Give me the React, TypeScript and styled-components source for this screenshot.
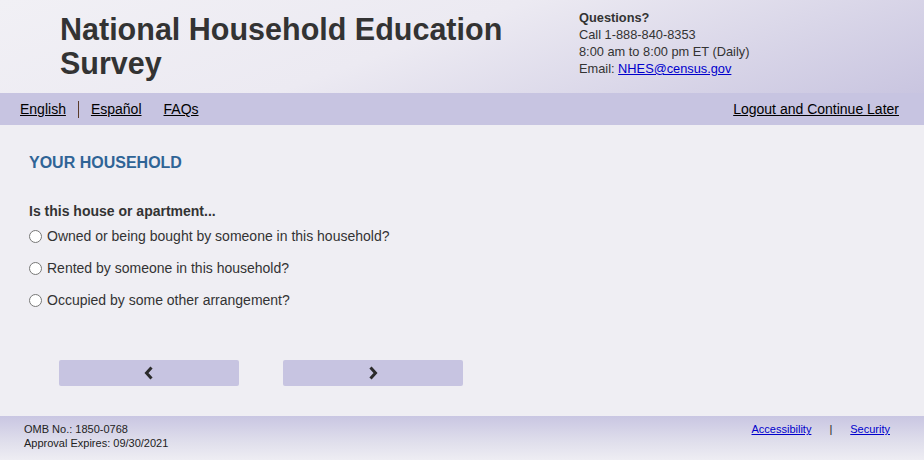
import React, { FC } from "react";
import styled, { createGlobalStyle } from "styled-components";

const GlobalStyle = createGlobalStyle`
  html, body {
    margin: 0;
    padding: 0;
    background: #efeef3;
    font-family: Arial, "Liberation Sans", sans-serif;
    color: #333;
  }
`;

const Page = styled.div`
  width: 924px;
  height: 460px;
  display: flex;
  flex-direction: column;
  background: #efeef3;
  overflow: hidden;
`;

const Header = styled.header`
  height: 93px;
  display: flex;
  background: linear-gradient(160deg, #f1f0f5 0%, #eceaf2 45%, #c9c5e0 100%);
`;

const Title = styled.h1`
  margin: 0;
  width: 480px;
  padding: 12px 0 0 60px;
  font-size: 30.5px;
  line-height: 34px;
  font-weight: bold;
  color: #333;
`;

const Contact = styled.div`
  margin-left: 39px;
  padding-top: 9px;
  font-size: 12.8px;
  line-height: 17px;
  color: #333;

  strong {
    display: block;
  }

  a {
    color: #0000cc;
  }
`;

const NavBar = styled.nav`
  height: 32px;
  display: flex;
  align-items: center;
  padding: 0 25px 0 20px;
  background: #c7c4e1;
  font-size: 14px;
`;

const NavLink = styled.a`
  color: #000;
  text-decoration: underline;
`;

const Separator = styled.span`
  width: 1px;
  height: 17px;
  margin: 0 12px;
  background: #5a3b2a;
`;

const Spacer = styled.span<{ $w: number }>`
  width: ${(p) => p.$w}px;
`;

const Grow = styled.div`
  flex: 1;
`;

const Main = styled.main`
  flex: 1;
  padding: 28px 0 0 29px;
`;

const SectionTitle = styled.h2`
  margin: 0;
  font-size: 16px;
  line-height: 20px;
  font-weight: bold;
  color: #2f6496;
`;

const Question = styled.p`
  margin: 30px 0 7px;
  font-size: 14px;
  line-height: 17px;
  font-weight: bold;
  color: #333;
`;

const Option = styled.label`
  height: 32px;
  display: flex;
  align-items: center;
  font-size: 14px;
  color: #333;
  margin-top: -7px;
  margin-bottom: 7px;

  input {
    width: 13px;
    height: 13px;
    margin: 0 5px 0 0;
  }
`;

const ButtonRow = styled.div`
  display: flex;
  gap: 44px;
  margin: 44px 0 0 30px;
`;

const NavButton = styled.button`
  width: 180px;
  height: 26px;
  border: none;
  border-radius: 2px;
  background: #c7c4e1;
  display: flex;
  align-items: center;
  justify-content: center;
  padding: 0;
  cursor: pointer;
`;

const Footer = styled.footer`
  height: 44px;
  display: flex;
  padding: 6px 34px 0 24px;
  box-sizing: border-box;
  background: linear-gradient(180deg, #c9c6e2 0%, #e0dfec 60%, #eeedf3 100%);
  font-size: 11px;
  line-height: 14px;
  color: #222;
`;

const FooterLinks = styled.div`
  display: flex;
  gap: 18px;

  a {
    color: #0000cc;
  }
`;

const Chevron: FC<{ dir: "left" | "right" }> = ({ dir }) => (
  <svg width="10" height="14" viewBox="0 0 10 14">
    <path
      d={dir === "left" ? "M7.5 1.5 L2.5 7 L7.5 12.5" : "M2.5 1.5 L7.5 7 L2.5 12.5"}
      fill="none"
      stroke="#2b2b2b"
      strokeWidth="3"
    />
  </svg>
);

const options = [
  "Owned or being bought by someone in this household?",
  "Rented by someone in this household?",
  "Occupied by some other arrangement?",
];

export default function App() {
  return (
    <Page>
      <GlobalStyle />
      <Header>
        <Title>National Household Education Survey</Title>
        <Contact>
          <strong>Questions?</strong>
          Call 1-888-840-8353
          <br />
          8:00 am to 8:00 pm ET (Daily)
          <br />
          Email: <a href="#">NHES@census.gov</a>
        </Contact>
      </Header>
      <NavBar>
        <NavLink href="#">English</NavLink>
        <Separator />
        <NavLink href="#">Español</NavLink>
        <Spacer $w={22} />
        <NavLink href="#">FAQs</NavLink>
        <Grow />
        <NavLink href="#">Logout and Continue Later</NavLink>
      </NavBar>
      <Main>
        <SectionTitle>YOUR HOUSEHOLD</SectionTitle>
        <Question>Is this house or apartment...</Question>
        {options.map((o) => (
          <Option key={o}>
            <input type="radio" name="tenure" />
            {o}
          </Option>
        ))}
        <ButtonRow>
          <NavButton aria-label="Previous">
            <Chevron dir="left" />
          </NavButton>
          <NavButton aria-label="Next">
            <Chevron dir="right" />
          </NavButton>
        </ButtonRow>
      </Main>
      <Footer>
        <div>
          OMB No.: 1850-0768
          <br />
          Approval Expires: 09/30/2021
        </div>
        <Grow />
        <FooterLinks>
          <a href="#">Accessibility</a>
          <span>|</span>
          <a href="#">Security</a>
        </FooterLinks>
      </Footer>
    </Page>
  );
}
